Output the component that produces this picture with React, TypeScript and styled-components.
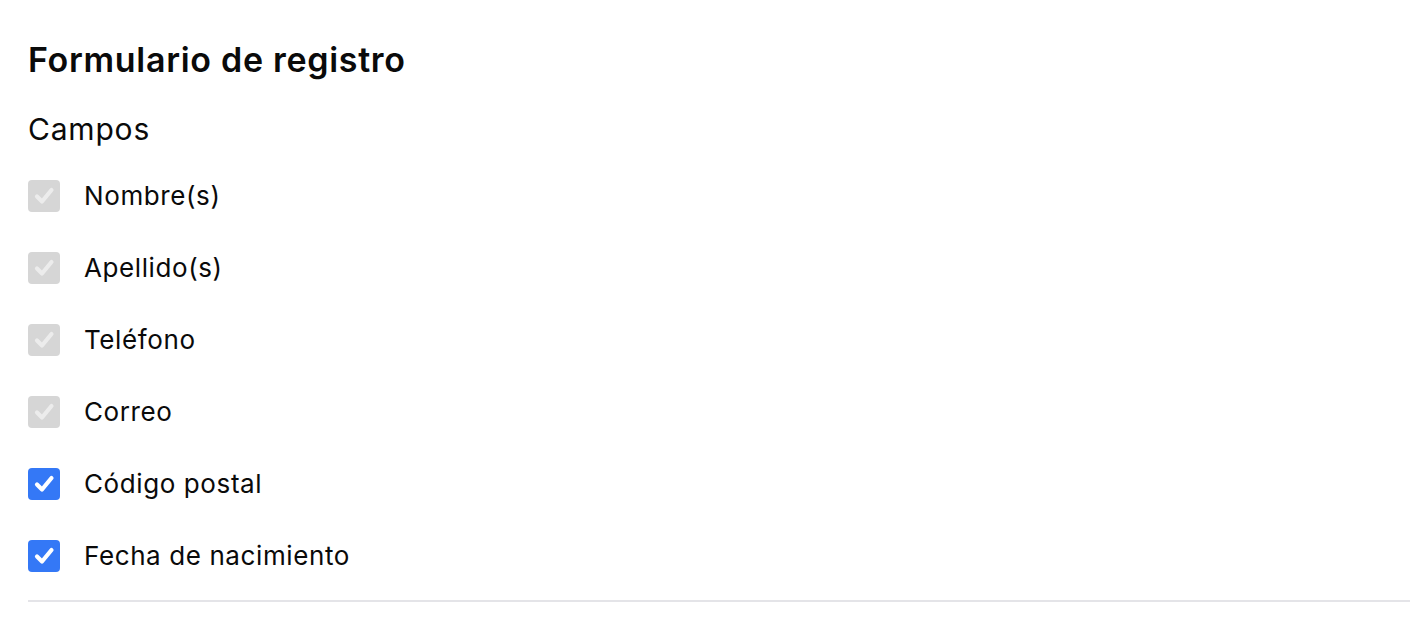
import React, { useState } from "react";
import styled, { createGlobalStyle } from "styled-components";

const GlobalStyle = createGlobalStyle`
  html, body {
    margin: 0;
    padding: 0;
    background: #ffffff;
  }
  body {
    font-family: Inter, "Noto Sans", "Liberation Sans", sans-serif;
    color: #0a0a0a;
  }
`;

const Page = styled.main`
  padding: 36px 0 0 28px;
`;

const Title = styled.h1`
  margin: 0;
  font-size: 34px;
  line-height: 48px;
  font-weight: 600;
  letter-spacing: 0.7px;
  color: #0a0a0a;
`;

const SectionTitle = styled.h2`
  margin: 25px 0 0;
  font-size: 30px;
  line-height: 40px;
  font-weight: 400;
  letter-spacing: 0.8px;
  color: #0a0a0a;
`;

const FieldList = styled.ul`
  list-style: none;
  margin: 31px 0 0;
  padding: 0;
  display: flex;
  flex-direction: column;
  gap: 40px;
`;

const Row = styled.li`
  display: flex;
  align-items: center;
  gap: 24px;
  height: 32px;
`;

const Box = styled.button<{ $checked: boolean; $locked: boolean }>`
  width: 32px;
  height: 32px;
  padding: 0;
  border: none;
  border-radius: 4px;
  display: flex;
  align-items: center;
  justify-content: center;
  flex-shrink: 0;
  background: ${(p) => (p.$locked ? "#d6d6d6" : p.$checked ? "#3478f6" : "#ffffff")};
  box-shadow: ${(p) => (!p.$locked && !p.$checked ? "inset 0 0 0 2px #c8c8cc" : "none")};
  cursor: ${(p) => (p.$locked ? "default" : "pointer")};
`;

const Label = styled.span`
  font-size: 26px;
  line-height: 32px;
  font-weight: 400;
  color: #0a0a0a;
  letter-spacing: 0.6px;
`;

const Divider = styled.hr`
  margin: 28px 0 0;
  border: none;
  height: 2px;
  background: #e4e4e8;
`;

type Field = { label: string; locked: boolean; checked: boolean };

const initialFields: Field[] = [
  { label: "Nombre(s)", locked: true, checked: true },
  { label: "Apellido(s)", locked: true, checked: true },
  { label: "Teléfono", locked: true, checked: true },
  { label: "Correo", locked: true, checked: true },
  { label: "Código postal", locked: false, checked: true },
  { label: "Fecha de nacimiento", locked: false, checked: true },
];

// heavy tick drawn inside each box
const Check = ({ color }: { color: string }) => (
  <svg width="26" height="26" viewBox="0 0 26 26" aria-hidden="true">
    <path
      d="M6 13.5 L11 18.5 L20.5 7"
      fill="none"
      stroke={color}
      strokeWidth="4.2"
      strokeLinecap="round"
      strokeLinejoin="round"
    />
  </svg>
);

export default function App() {
  const [fields, setFields] = useState(initialFields);

  const toggle = (i: number) =>
    setFields((prev) =>
      prev.map((f, j) => (j === i && !f.locked ? { ...f, checked: !f.checked } : f))
    );

  return (
    <>
      <GlobalStyle />
      <Page>
        <Title>Formulario de registro</Title>
        <SectionTitle>Campos</SectionTitle>
        <FieldList>
          {fields.map((f, i) => (
            <Row key={f.label}>
              <Box
                type="button"
                role="checkbox"
                aria-checked={f.checked}
                aria-disabled={f.locked}
                $checked={f.checked}
                $locked={f.locked}
                onClick={() => toggle(i)}
              >
                {f.checked && <Check color={f.locked ? "#ececec" : "#ffffff"} />}
              </Box>
              <Label>{f.label}</Label>
            </Row>
          ))}
        </FieldList>
        <Divider />
      </Page>
    </>
  );
}
